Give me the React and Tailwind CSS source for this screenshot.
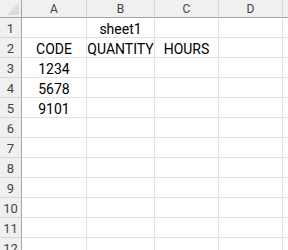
const COLS = [
  { key: "A", w: "w-[65px]" },
  { key: "B", w: "w-[68px]" },
  { key: "C", w: "w-[64px]" },
  { key: "D", w: "w-[64px]" },
];

const DATA = {
  1: { B: "sheet1" },
  2: { A: "CODE", B: "QUANTITY", C: "HOURS" },
  3: { A: "1234" },
  4: { A: "5678" },
  5: { A: "9101" },
};

const ROWS = [1, 2, 3, 4, 5, 6, 7, 8, 9, 10, 11, 12];

export default function App() {
  return (
    <div
      className="w-[288px] h-[250px] overflow-hidden bg-white"
      style={{ fontFamily: "Roboto, 'Liberation Sans', sans-serif" }}
    >
      {/* column header */}
      <div className="flex h-[18px]">
        <div className="relative w-[22px] shrink-0 bg-[#f0f0f0] border-r border-b border-[#a6a6a6]">
          <div className="absolute right-[2px] bottom-[2px] w-0 h-0 border-l-[12px] border-l-transparent border-b-[12px] border-b-[#dcdcdc]" />
        </div>
        {COLS.map((c) => (
          <div
            key={c.key}
            className={`${c.w} shrink-0 flex items-center justify-center bg-[#f0f0f0] border-r border-r-[#d6d6d6] border-b border-b-[#a6a6a6] text-[12px] leading-none text-[#444]`}
          >
            {c.key}
          </div>
        ))}
        <div className="flex-1 bg-[#f0f0f0] border-b border-[#a6a6a6]" />
      </div>

      {ROWS.map((r) => (
        <div key={r} className="flex h-[20px]">
          <div className="w-[22px] shrink-0 flex items-center justify-center pt-[2px] bg-[#f0f0f0] border-r border-r-[#a6a6a6] border-b border-b-[#d6d6d6] text-[13px] leading-none text-[#444]">
            {r}
          </div>
          {COLS.map((c) => (
            <div
              key={c.key}
              className={`${c.w} shrink-0 flex items-end justify-center pb-px border-r border-b border-[#e1e1e1] text-[14px] leading-none text-black whitespace-nowrap overflow-hidden`}
            >
              {DATA[r]?.[c.key] ?? ""}
            </div>
          ))}
          <div className="flex-1 border-b border-[#e1e1e1]" />
        </div>
      ))}
    </div>
  );
}
